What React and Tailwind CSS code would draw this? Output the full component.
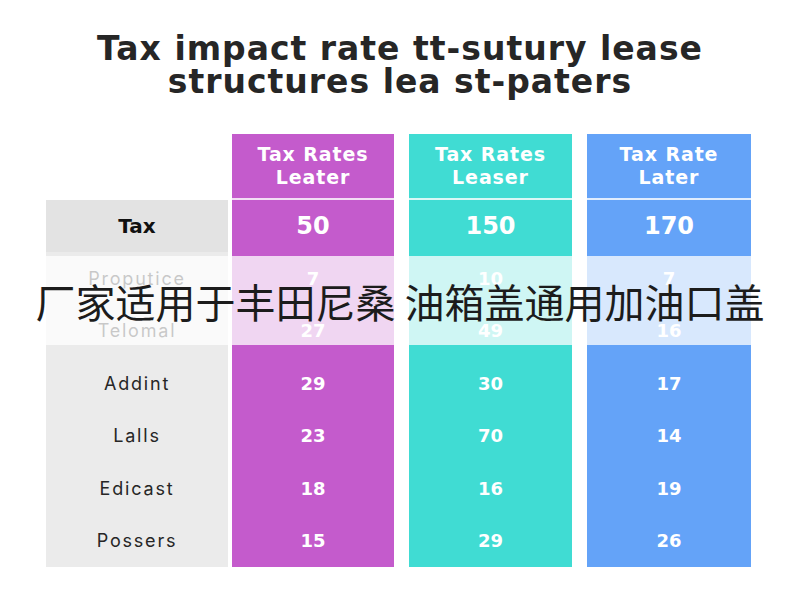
const rows = [
  { label: 'Tax', a: '50', b: '150', c: '170', head: true },
  { label: 'Proputice', a: '7', b: '10', c: '7' },
  { label: 'Telomal', a: '27', b: '49', c: '16' },
  { label: 'Addint', a: '29', b: '30', c: '17' },
  { label: 'Lalls', a: '23', b: '70', c: '14' },
  { label: 'Edicast', a: '18', b: '16', c: '19' },
  { label: 'Possers', a: '15', b: '29', c: '26' },
];

const wide = "font-['DejaVu_Sans',sans-serif]";

function ValueColumn({ title, sub, field, color, className }) {
  return (
    <div className={`flex flex-col ${color} ${className}`}>
      <div className={`flex h-[64px] flex-col items-center justify-center ${wide} text-[19px] font-bold leading-[23px] tracking-[0.9px] text-white`}>
        <span>{title}</span>
        <span>{sub}</span>
      </div>
      <div className="h-[2px] bg-white/80" />
      {rows.map(r => (
        <div
          key={r.label}
          className={`flex h-[52.4px] items-center justify-center ${wide} font-bold text-white ${r.head ? 'text-[24px]' : 'text-[18px]'}`}
        >
          {r[field]}
        </div>
      ))}
    </div>
  );
}

export default function App() {
  return (
    <div className="relative h-[600px] w-[800px] overflow-hidden bg-white font-['Inter',sans-serif]">
      <h1 className={`pt-[32px] text-center ${wide} text-[33px] font-bold leading-[33px] tracking-[1px] text-[#262626]`}>
        Tax impact rate tt-sutury lease
        <br />
        structures lea st-paters
      </h1>

      <div className="ml-[46px] mt-[36px] flex">
        <div className="flex w-[182px] flex-col">
          <div className="h-[66px]" />
          {rows.map(r => (
            <div
              key={r.label}
              className={`flex h-[52.4px] items-center justify-center ${r.head ? `bg-[#e3e3e3] ${wide} text-[20px] font-bold text-[#111]` : 'bg-[#ebebeb] text-[18px] tracking-[1.8px] text-[#262626]'}`}
            >
              {r.label}
            </div>
          ))}
        </div>
        <ValueColumn title="Tax Rates" sub="Leater" field="a" color="bg-[#c45bcc]" className="ml-[4px] w-[162px]" />
        <ValueColumn title="Tax Rates" sub="Leaser" field="b" color="bg-[#40dcd3]" className="ml-[15px] w-[163px]" />
        <ValueColumn title="Tax Rate" sub="Later" field="c" color="bg-[#64a3f8]" className="ml-[15px] w-[164px]" />
      </div>

      <div className="absolute inset-x-0 top-[256px] flex h-[89px] items-center justify-center bg-white/75">
        <span className="whitespace-pre font-['Noto_Sans_CJK_SC',sans-serif] text-[40px] leading-none text-[#1c1c1c]">
          厂家适用于丰田尼桑 油箱盖通用加油口盖
        </span>
      </div>
    </div>
  );
}
